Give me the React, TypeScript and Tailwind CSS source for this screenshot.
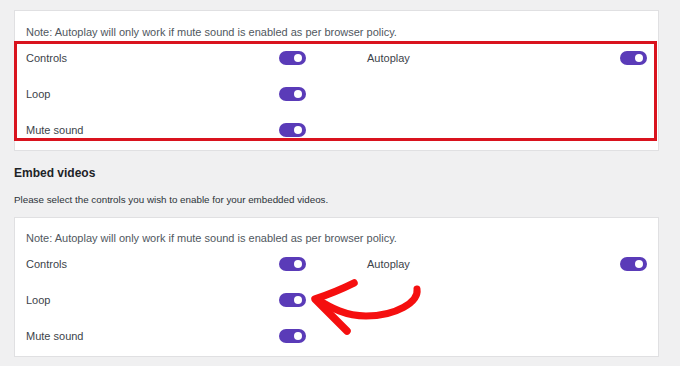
const rows = [
  { left: "Controls", right: "Autoplay" },
  { left: "Loop", right: null },
  { left: "Mute sound", right: null },
];

const Toggle = () => (
  <span className="relative inline-block h-[14px] w-[27px] shrink-0 rounded-full bg-[#5a3bb8]">
    <span className="absolute right-[4px] top-[3px] h-[8px] w-[8px] rounded-full bg-white" />
  </span>
);

const Rows = () => (
  <div className="flex flex-col gap-[20px]">
    {rows.map((row) => (
      <div key={row.left} className="flex h-[16px] items-center gap-[61px]">
        <div className="flex w-[280px] items-center justify-between">
          <span className="text-[11px] leading-[16px] text-[#3c434a]">{row.left}</span>
          <Toggle />
        </div>
        {row.right && (
          <div className="flex w-[280px] items-center justify-between">
            <span className="text-[11px] leading-[16px] text-[#3c434a]">{row.right}</span>
            <Toggle />
          </div>
        )}
      </div>
    ))}
  </div>
);

const Note = () => (
  <p className="px-[11px] text-[11px] leading-[16px] text-[#50575e]">
    Note: Autoplay will only work if mute sound is enabled as per browser policy.
  </p>
);

export default function App() {
  return (
    <div
      className="relative h-[366px] w-[680px] overflow-hidden bg-[#f0f0f1] pl-[14px] pt-[10px]"
      style={{ fontFamily: '"Liberation Sans", Arial, sans-serif' }}
    >
      <div className="w-[645px] border border-[#e0e0e2] bg-white pb-[9px] pt-[13px]">
        <Note />
        <div className="-ml-[1px] mr-[1px] mt-[1px] border-[3px] border-[#d9131e] pb-0 pl-[9px] pr-[7px] pt-[6px]">
          <Rows />
        </div>
      </div>

      <h2 className="mt-[14px] text-[12px] font-bold leading-[16px] text-[#1d2327]">Embed videos</h2>
      <p className="mt-[11px] text-[9.8px] leading-[16px] text-[#2c3338]">
        Please select the controls you wish to enable for your embedded videos.
      </p>

      <div className="mt-[9px] w-[645px] border border-[#e0e0e2] bg-white pb-[12px] pt-[12px]">
        <Note />
        <div className="mt-[10px] pl-[11px]">
          <Rows />
        </div>
      </div>

      {/* hand-drawn arrow pointing at the Loop toggle */}
      <svg
        className="pointer-events-none absolute left-0 top-0"
        width="680"
        height="366"
        viewBox="0 0 680 366"
      >
        <path
          d="M 417 289 C 419 302, 396 316, 366 316 C 346 316, 331 308, 317 299"
          fill="none"
          stroke="#f50f0f"
          strokeWidth="7"
          strokeLinecap="round"
        />
        <path
          d="M 354 283 C 340 290, 327 295, 315 299 C 326 310, 337 321, 347 331"
          fill="none"
          stroke="#f50f0f"
          strokeWidth="7.5"
          strokeLinecap="round"
          strokeLinejoin="round"
        />
      </svg>
    </div>
  );
}
